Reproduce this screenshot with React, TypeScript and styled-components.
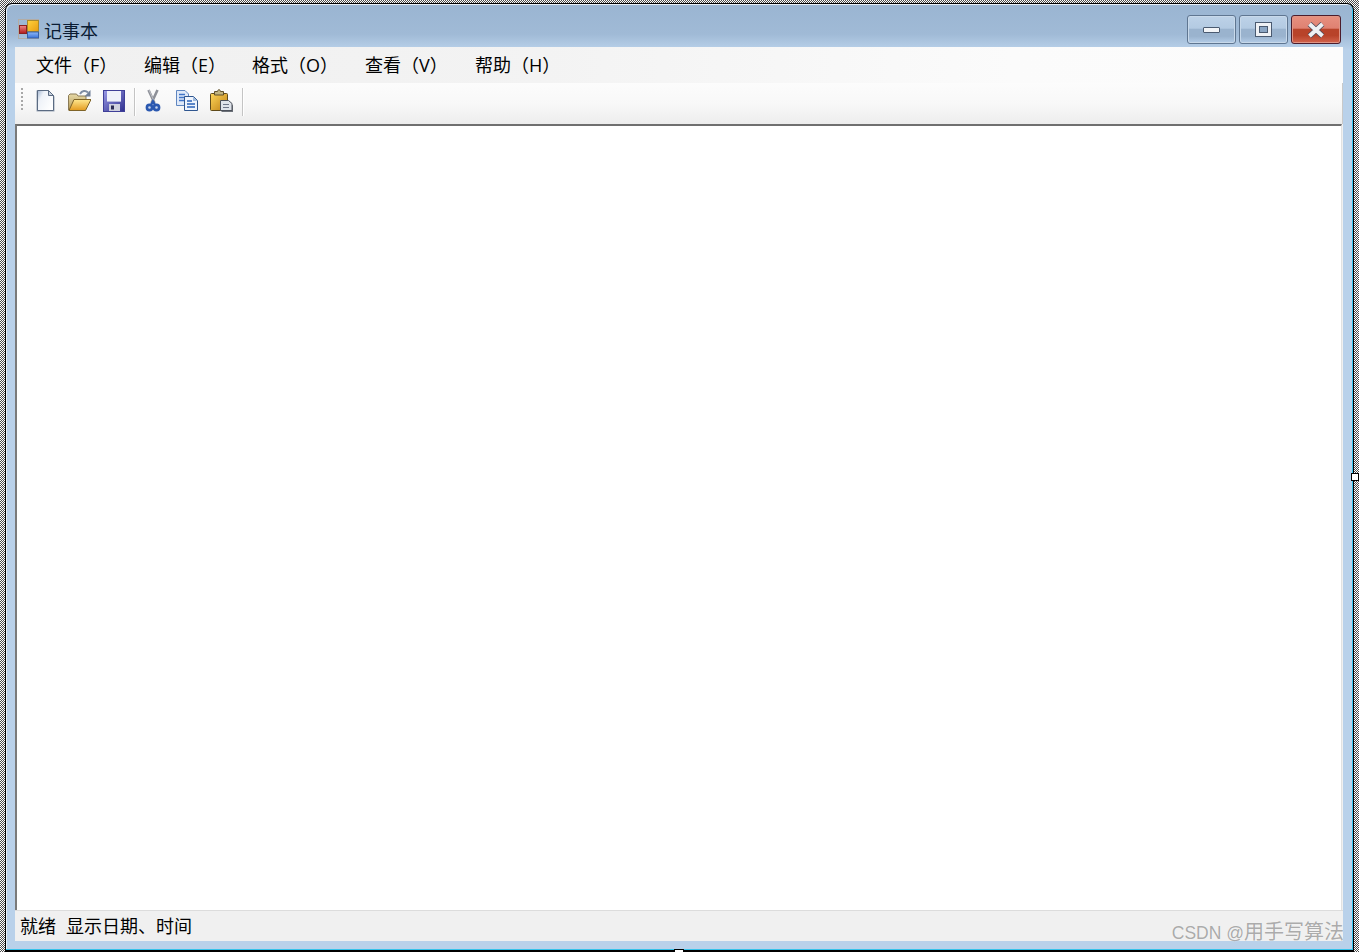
import React from 'react';
import styled, { createGlobalStyle } from 'styled-components';

const menuItems = [
  { label: '文件（F）', width: 108 },
  { label: '编辑（E）', width: 108 },
  { label: '格式（O）', width: 113 },
  { label: '查看（V）', width: 110 },
  { label: '帮助（H）', width: 110 }
];

const NewIcon = () => (
  <svg width="24" height="24" viewBox="0 0 24 24">
    <defs>
      <linearGradient id="newFill" x1="0" y1="0" x2="1" y2="0.7">
        <stop offset="0" stopColor="#a3b6d0" />
        <stop offset="0.32" stopColor="#eef2f8" />
        <stop offset="1" stopColor="#ffffff" />
      </linearGradient>
    </defs>
    <path d="M4.5 3.5H15L20.5 9V22.5H4.5Z" fill="#d5dbe4" stroke="#9aa6b6" strokeWidth="2" />
    <path d="M4.5 2.5H15.5L20.5 7.5V22.5H4.5Z" fill="url(#newFill)" stroke="#5b6b82" />
    <path d="M15.5 2.5V7.5H20.5Z" fill="#c9d2de" stroke="#5b6b82" />
  </svg>
);

const OpenIcon = () => (
  <svg width="24" height="24" viewBox="0 0 24 24">
    <defs>
      <linearGradient id="openFill" x1="0" y1="0" x2="0" y2="1">
        <stop offset="0" stopColor="#ffe88f" />
        <stop offset="1" stopColor="#e39a1e" />
      </linearGradient>
      <linearGradient id="openBack" x1="0" y1="0" x2="0" y2="1">
        <stop offset="0" stopColor="#e7d9a6" />
        <stop offset="1" stopColor="#b49a58" />
      </linearGradient>
    </defs>
    <path d="M1.5 22V7.5L3 6H9.5L11 8H19V12L8 22Z" fill="url(#openBack)" stroke="#8a7a55" />
    <path d="M2 22.5L7 11.5H24L18.5 22.5Z" fill="url(#openFill)" stroke="#7f6428" />
    <path d="M13 6C15 2.5 18.5 2 21 4.5" fill="none" stroke="#7f8da3" strokeWidth="2" />
    <path d="M23.5 2V8.5H17.5Z" fill="#6f7f98" />
  </svg>
);

const SaveIcon = () => (
  <svg width="24" height="24" viewBox="0 0 24 24">
    <defs>
      <linearGradient id="saveFill" x1="0" y1="0" x2="1" y2="1">
        <stop offset="0" stopColor="#9a9ae6" />
        <stop offset="1" stopColor="#2f2f8e" />
      </linearGradient>
    </defs>
    <rect x="2.5" y="2.5" width="21" height="21" fill="url(#saveFill)" stroke="#3f3f98" />
    <rect x="6" y="3" width="14" height="10" fill="#eff1fa" />
    <rect x="6" y="13" width="14" height="1" fill="#b7b8de" />
    <rect x="8" y="16" width="11" height="7" fill="#cfd0de" />
    <rect x="10" y="17.5" width="3" height="4" fill="#2b2b55" />
  </svg>
);

const CutIcon = () => (
  <svg width="24" height="24" viewBox="0 0 24 24">
    <path d="M7.5 2L13.5 15M16.5 2L10.5 15" fill="none" stroke="#8d9098" strokeWidth="2.6" />
    <path d="M8 2L13 13" fill="none" stroke="#c7c9cf" strokeWidth="0.8" />
    <circle cx="8.5" cy="19.5" r="2.6" fill="#c8d6ee" stroke="#2a58b0" strokeWidth="2.6" />
    <circle cx="15.5" cy="19.5" r="2.6" fill="#c8d6ee" stroke="#2a58b0" strokeWidth="2.6" />
    <path d="M10 17L12 13.5L14 17" fill="none" stroke="#2a58b0" strokeWidth="2.4" />
  </svg>
);

const CopyIcon = () => (
  <svg width="24" height="24" viewBox="0 0 24 24">
    <path d="M1.5 2.5H10L13.5 6V17.5H1.5Z" fill="#dfe9f8" stroke="#5f86c0" />
    <path d="M4 6.5H10M4 9.5H10M4 12.5H9" stroke="#3f74c8" strokeWidth="1.3" />
    <path d="M9.5 8.5H18.5L22.5 12.5V22.5H9.5Z" fill="#eef4fd" stroke="#2f568f" />
    <path d="M18 8.5V13H22.5Z" fill="#9db8dc" />
    <path d="M12 13H17M12 16H20M12 19H20" stroke="#2a62b8" strokeWidth="1.5" />
  </svg>
);

const PasteIcon = () => (
  <svg width="24" height="24" viewBox="0 0 24 24">
    <defs>
      <linearGradient id="pasteFill" x1="0" y1="0" x2="1" y2="1">
        <stop offset="0" stopColor="#ffd659" />
        <stop offset="1" stopColor="#bd7f14" />
      </linearGradient>
    </defs>
    <rect x="1.5" y="5.5" width="17" height="17" rx="1" fill="url(#pasteFill)" stroke="#5f4a1a" />
    <path d="M5.5 7V3.5H8.5C9 1 11 1 11.5 3.5H14.5V7Z" fill="#c2b47f" stroke="#5f4f2a" />
    <path d="M12.5 14.5H20L24 17.5V24H12.5Z" fill="#6b7078" />
    <path d="M11.5 12.5H19.5L23 15.5V22.5H11.5Z" fill="#dfe3ea" stroke="#4c515b" />
    <path d="M14 16.5H20M14 19.5H20" stroke="#6e7688" strokeWidth="1.2" />
  </svg>
);

const AppIcon = () => (
  <svg width="21" height="20" viewBox="0 0 21 20">
    <defs>
      <linearGradient id="appYellow" x1="0" y1="0" x2="1" y2="1">
        <stop offset="0" stopColor="#ffd23c" />
        <stop offset="1" stopColor="#e89c10" />
      </linearGradient>
      <linearGradient id="appRed" x1="0" y1="0" x2="0" y2="1">
        <stop offset="0" stopColor="#f08a8a" />
        <stop offset="1" stopColor="#b01818" />
      </linearGradient>
      <linearGradient id="appBlue" x1="0" y1="0" x2="0" y2="1">
        <stop offset="0" stopColor="#8fb8f5" />
        <stop offset="1" stopColor="#3a72d8" />
      </linearGradient>
    </defs>
    <rect x="0.5" y="0.5" width="20" height="19" fill="none" stroke="#b3aca4" />
    <rect x="9.5" y="1.5" width="11" height="11" fill="url(#appYellow)" stroke="#a88a2c" />
    <rect x="1.5" y="6.5" width="7" height="8" fill="url(#appRed)" stroke="#8c2020" />
    <rect x="9.5" y="13" width="11" height="6" fill="url(#appBlue)" stroke="#3660a8" />
  </svg>
);

const App: React.FC = () => (
  <>
    <GlobalStyle />
    <Page>
      <Window>
        <TitleBar>
          <TitleGroup>
            <AppIcon />
            <TitleText>记事本</TitleText>
          </TitleGroup>
          <Controls>
            <ControlButton>
              <MinGlyph />
            </ControlButton>
            <ControlButton>
              <MaxGlyph />
            </ControlButton>
            <CloseButton>
              <svg width="22" height="16" viewBox="0 0 22 16">
                <path d="M4.5 2L17.5 14M17.5 2L4.5 14" stroke="#4f4a58" strokeWidth="5.6" />
                <path d="M4.5 2L17.5 14M17.5 2L4.5 14" stroke="#eef0f3" strokeWidth="4" />
              </svg>
            </CloseButton>
          </Controls>
        </TitleBar>
        <Client>
          <MenuBar>
            {menuItems.map(item => (
              <MenuItem key={item.label} itemWidth={item.width}>
                {item.label}
              </MenuItem>
            ))}
          </MenuBar>
          <ToolBar>
            <Grip />
            <ToolButton><NewIcon /></ToolButton>
            <ToolButton><OpenIcon /></ToolButton>
            <ToolButton><SaveIcon /></ToolButton>
            <Separator />
            <ToolButton><CutIcon /></ToolButton>
            <ToolButton><CopyIcon /></ToolButton>
            <ToolButton><PasteIcon /></ToolButton>
            <Separator />
          </ToolBar>
          <Editor />
          <StatusBar>
            <span>就绪</span>
            <span>显示日期、时间</span>
          </StatusBar>
        </Client>
      </Window>
      <RightHandle />
      <BottomHandle />
      <Watermark>
        <WatermarkLatin>CSDN @</WatermarkLatin>用手写算法
      </Watermark>
    </Page>
  </>
);

const GlobalStyle = createGlobalStyle`
  html, body {
    margin: 0;
    padding: 0;
    background: #fff;
  }
`;

const Page = styled.div`
  position: relative;
  box-sizing: border-box;
  width: 1359px;
  height: 952px;
  overflow: hidden;
  padding: 3px 5px 0;
  background: repeating-conic-gradient(#4c4c4c 0 25%, #fff 0 50%) 0 0 / 2px 2px;
  font-family: 'Open Sans', 'Noto Sans CJK SC', sans-serif;
  color: #000;
`;

const Window = styled.div`
  box-sizing: border-box;
  display: flex;
  flex-direction: column;
  height: 949px;
  border: 1px solid #000;
  border-bottom-width: 2px;
  border-radius: 7px 7px 0 0;
  background: linear-gradient(#9ab5d2 0, #a0bad6 30px, #b9d1ea 46px);
  box-shadow: inset -1px -1px 0 #35c2ea, inset 1px 1px 0 #e8eff7;
`;

const TitleBar = styled.div`
  display: flex;
  flex: none;
  height: 43px;
  justify-content: space-between;
  padding: 11px 12px 0 12px;
  box-sizing: border-box;
`;

const TitleGroup = styled.div`
  display: flex;
  align-items: center;
  gap: 5px;
  height: 28px;
`;

const TitleText = styled.span`
  font-size: 18px;
  line-height: 28px;
  color: #0b1c33;
  position: relative;
  top: 2px;
`;

const Controls = styled.div`
  display: flex;
  gap: 3px;
`;

const ControlButton = styled.div`
  box-sizing: border-box;
  display: flex;
  align-items: center;
  justify-content: center;
  width: 49px;
  height: 29px;
  border: 1px solid #5f7691;
  border-radius: 3px;
  background: linear-gradient(#bdd2e8 0, #b3cae2 46%, #9ab3ce 47%, #9ab3ce 75%, #b4cde8 100%);
  box-shadow: inset 0 0 0 1px #c8d9ea;
`;

const CloseButton = styled(ControlButton)`
  width: 50px;
  border-color: #4c1c2c;
  background: linear-gradient(#e79080 0, #df8171 46%, #b8432a 47%, #b8432a 72%, #d3644e 100%);
  box-shadow: inset 0 0 0 1px #e09585;
`;

const MinGlyph = styled.div`
  width: 15px;
  height: 4px;
  border: 1px solid #4a5a70;
  border-radius: 1px;
  background: #f2f4f7;
`;

const MaxGlyph = styled.div`
  box-sizing: border-box;
  width: 17px;
  height: 15px;
  border: 4px solid #eef1f5;
  outline: 1px solid #4a5a70;
  outline-offset: -1px;
  background: #8ba6c4;
  box-shadow: inset 0 0 0 1px #4a5a70;
`;

const Client = styled.div`
  display: flex;
  flex: 1;
  flex-direction: column;
  min-height: 0;
  margin: 0 10px 9px 9px;
  background: #f0f0f0;
`;

const MenuBar = styled.div`
  box-sizing: border-box;
  display: flex;
  flex: none;
  height: 36px;
  align-items: center;
  padding: 1px 0 0 21px;
  background: linear-gradient(90deg, #f0f0f0 0, #f3f3f3 40%, #fbfbfb 75%, #fcfcfc 100%);
`;

const MenuItem = styled.span<{ itemWidth: number }>`
  width: ${props => props.itemWidth}px;
  font-size: 18px;
  line-height: 35px;
  white-space: nowrap;
`;

const ToolBar = styled.div`
  box-sizing: border-box;
  display: flex;
  flex: none;
  height: 41px;
  align-items: flex-start;
  padding: 5px 0 0 6px;
  background: linear-gradient(#fcfcfc 0, #f8f8f8 50%, #ededed 100%);
  border-right: 1px solid #c9c9c9;
`;

const Grip = styled.div`
  width: 2px;
  height: 24px;
  margin-right: 5px;
  background: repeating-linear-gradient(#a8a8a8 0 2px, transparent 2px 4px);
`;

const ToolButton = styled.div`
  display: flex;
  justify-content: center;
  width: 34px;
  height: 24px;
`;

const Separator = styled.div`
  width: 1px;
  height: 28px;
  margin: 0 1px 0 4px;
  background: #c4c4c4;
  box-shadow: 1px 0 0 #fff;
`;

const Editor = styled.div`
  flex: 1;
  min-height: 0;
  background: #fff;
  border-top: 2px solid #6f6f6f;
  border-left: 2px solid #7a7a7a;
  border-right: 1px solid #e2e2e2;
  margin-right: 1px;
`;

const StatusBar = styled.div`
  box-sizing: border-box;
  display: flex;
  flex: none;
  height: 31px;
  align-items: center;
  gap: 10px;
  padding: 0 0 2px 5px;
  border-top: 1px solid #dcdcdc;
  background: #f0f0f0;
  font-size: 18px;
`;

const RightHandle = styled.div`
  position: absolute;
  right: 0;
  top: 473px;
  width: 6px;
  height: 6px;
  background: #fff;
  border: 1px solid #000;
`;

const BottomHandle = styled.div`
  position: absolute;
  left: 674px;
  bottom: 0;
  width: 8px;
  height: 2px;
  background: #fff;
  border: 1px solid #000;
  border-bottom: 0;
  border-radius: 1px 1px 0 0;
`;

const Watermark = styled.div`
  position: absolute;
  right: 15px;
  bottom: 7px;
  font-family: 'Liberation Sans', 'Noto Sans CJK SC', sans-serif;
  font-size: 20px;
  line-height: 24px;
  color: rgba(130, 130, 130, 0.68);
  text-shadow: 0 0 1px rgba(255, 255, 255, 0.8);
  white-space: nowrap;
`;

const WatermarkLatin = styled.span`
  font-size: 17.5px;
`;

export default App;
